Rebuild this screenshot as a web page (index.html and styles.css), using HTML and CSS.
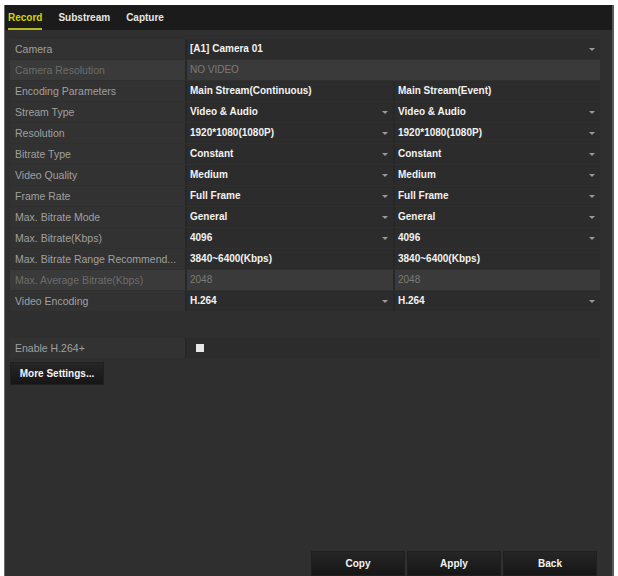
FILE: index.html
```html
<!DOCTYPE html>
<html lang="en">
<head>
    <meta charset="UTF-8">
    <title>Record Parameters</title>
    <link rel="stylesheet" href="styles.css">
</head>
<body>
    <div class="panel">
        <div class="tabs">
            <a href="javascript:;" class="tab active">Record</a>
            <a href="javascript:;" class="tab">Substream</a>
            <a href="javascript:;" class="tab">Capture</a>
        </div>
        <div class="content">
            <div class="rows">
                <div class="row">
                    <div class="label">Camera</div>
                    <div class="cell wide drop">[A1] Camera 01</div>
                </div>
                <div class="row off">
                    <div class="label">Camera Resolution</div>
                    <div class="cell wide">NO VIDEO</div>
                </div>
                <div class="row">
                    <div class="label">Encoding Parameters</div>
                    <div class="cell">Main Stream(Continuous)</div>
                    <div class="cell">Main Stream(Event)</div>
                </div>
                <div class="row">
                    <div class="label">Stream Type</div>
                    <div class="cell drop">Video &amp; Audio</div>
                    <div class="cell drop">Video &amp; Audio</div>
                </div>
                <div class="row">
                    <div class="label">Resolution</div>
                    <div class="cell drop">1920*1080(1080P)</div>
                    <div class="cell drop">1920*1080(1080P)</div>
                </div>
                <div class="row">
                    <div class="label">Bitrate Type</div>
                    <div class="cell drop">Constant</div>
                    <div class="cell drop">Constant</div>
                </div>
                <div class="row">
                    <div class="label">Video Quality</div>
                    <div class="cell drop">Medium</div>
                    <div class="cell drop">Medium</div>
                </div>
                <div class="row">
                    <div class="label">Frame Rate</div>
                    <div class="cell drop">Full Frame</div>
                    <div class="cell drop">Full Frame</div>
                </div>
                <div class="row">
                    <div class="label">Max. Bitrate Mode</div>
                    <div class="cell drop">General</div>
                    <div class="cell drop">General</div>
                </div>
                <div class="row">
                    <div class="label">Max. Bitrate(Kbps)</div>
                    <div class="cell drop">4096</div>
                    <div class="cell drop">4096</div>
                </div>
                <div class="row">
                    <div class="label">Max. Bitrate Range Recommend...</div>
                    <div class="cell">3840~6400(Kbps)</div>
                    <div class="cell">3840~6400(Kbps)</div>
                </div>
                <div class="row off">
                    <div class="label">Max. Average Bitrate(Kbps)</div>
                    <div class="cell">2048</div>
                    <div class="cell">2048</div>
                </div>
                <div class="row">
                    <div class="label">Video Encoding</div>
                    <div class="cell drop">H.264</div>
                    <div class="cell drop">H.264</div>
                </div>
            </div>

            <div class="row plus">
                <div class="label">Enable H.264+</div>
                <div class="cell wide"><span class="check"></span></div>
            </div>
            <a href="javascript:;" class="btn more">More Settings...</a>
        </div>
        <div class="footer">
            <a href="javascript:;" class="btn">Copy</a>
            <a href="javascript:;" class="btn">Apply</a>
            <a href="javascript:;" class="btn">Back</a>
        </div>
    </div>
</body>
</html>
```

FILE: styles.css
```css
*{
    margin: 0;
    padding: 0;
    box-sizing: border-box;
}
body{
    background: #fff;
    font-family: "Liberation Sans", Arial, sans-serif;
    font-size: 10px;
}
.panel{
    display: flex;
    flex-direction: column;
    width: 610px;
    height: 571px;
    margin: 5px 0 0 4px;
    background: #2f2f2f;
    border-left: 1px solid #6a6a6a;
    border-right: 2px solid #5a5a5a;
}
.tabs{
    display: flex;
    gap: 16px;
    height: 25px;
    padding: 0 0 0 3px;
    background: #1b1b1b;
}
.tab{
    display: block;
    padding: 7px 0 0;
    color: #e6e6e6;
    font-weight: bold;
    font-size: 10px;
    text-decoration: none;
    border-bottom: 2px solid transparent;
}
.tab.active{
    color: #d4d400;
    border-bottom-color: #b8b820;
}
.content{
    flex: 1;
    padding: 9px 12px 0 5px;
}
.rows{
    display: flex;
    flex-direction: column;
    gap: 1px;
}
.row{
    display: grid;
    grid-template-columns: 175px 206px 1fr;
    gap: 2px;
    height: 20px;
    background: #272727;
}
.label, .cell{
    display: flex;
    align-items: center;
    position: relative;
    background: #323232;
    line-height: 20px;
    white-space: nowrap;
}
.label{
    padding-left: 5px;
    color: #a0a0a0;
    font-size: 10.5px;
}
.cell{
    padding-left: 3px;
    color: #f2f2f2;
    font-weight: bold;
    background: #2c2c2c;
}
.cell.wide{
    grid-column: 2 / 4;
}
.drop::after{
    content: "";
    position: absolute;
    right: 5px;
    top: 9px;
    border-left: 3px solid transparent;
    border-right: 3px solid transparent;
    border-top: 3px solid #9a9a9a;
}
.row.off .label, .row.off .cell{
    background: #3a3a3a;
    color: #6c6c6c;
    font-weight: normal;
}
.row.off .cell{
    color: #7a7a7a;
}
.row.plus{
    margin-top: 27px;
}
.check{
    display: block;
    width: 8px;
    height: 8px;
    margin-left: 6px;
    background: #e8e8e8;
}
.btn{
    display: flex;
    align-items: center;
    justify-content: center;
    height: 23px;
    color: #f4f4f4;
    font-weight: bold;
    text-decoration: none;
    background: linear-gradient(#262626, #161616);
    border: 1px solid #202020;
}
.more{
    width: 94px;
    margin-top: 4px;
}
.footer{
    display: flex;
    justify-content: flex-end;
    gap: 2px;
    padding: 0 15px 0 0;
    height: 25px;
}
.footer .btn{
    width: 94px;
    height: 25px;
}
```
